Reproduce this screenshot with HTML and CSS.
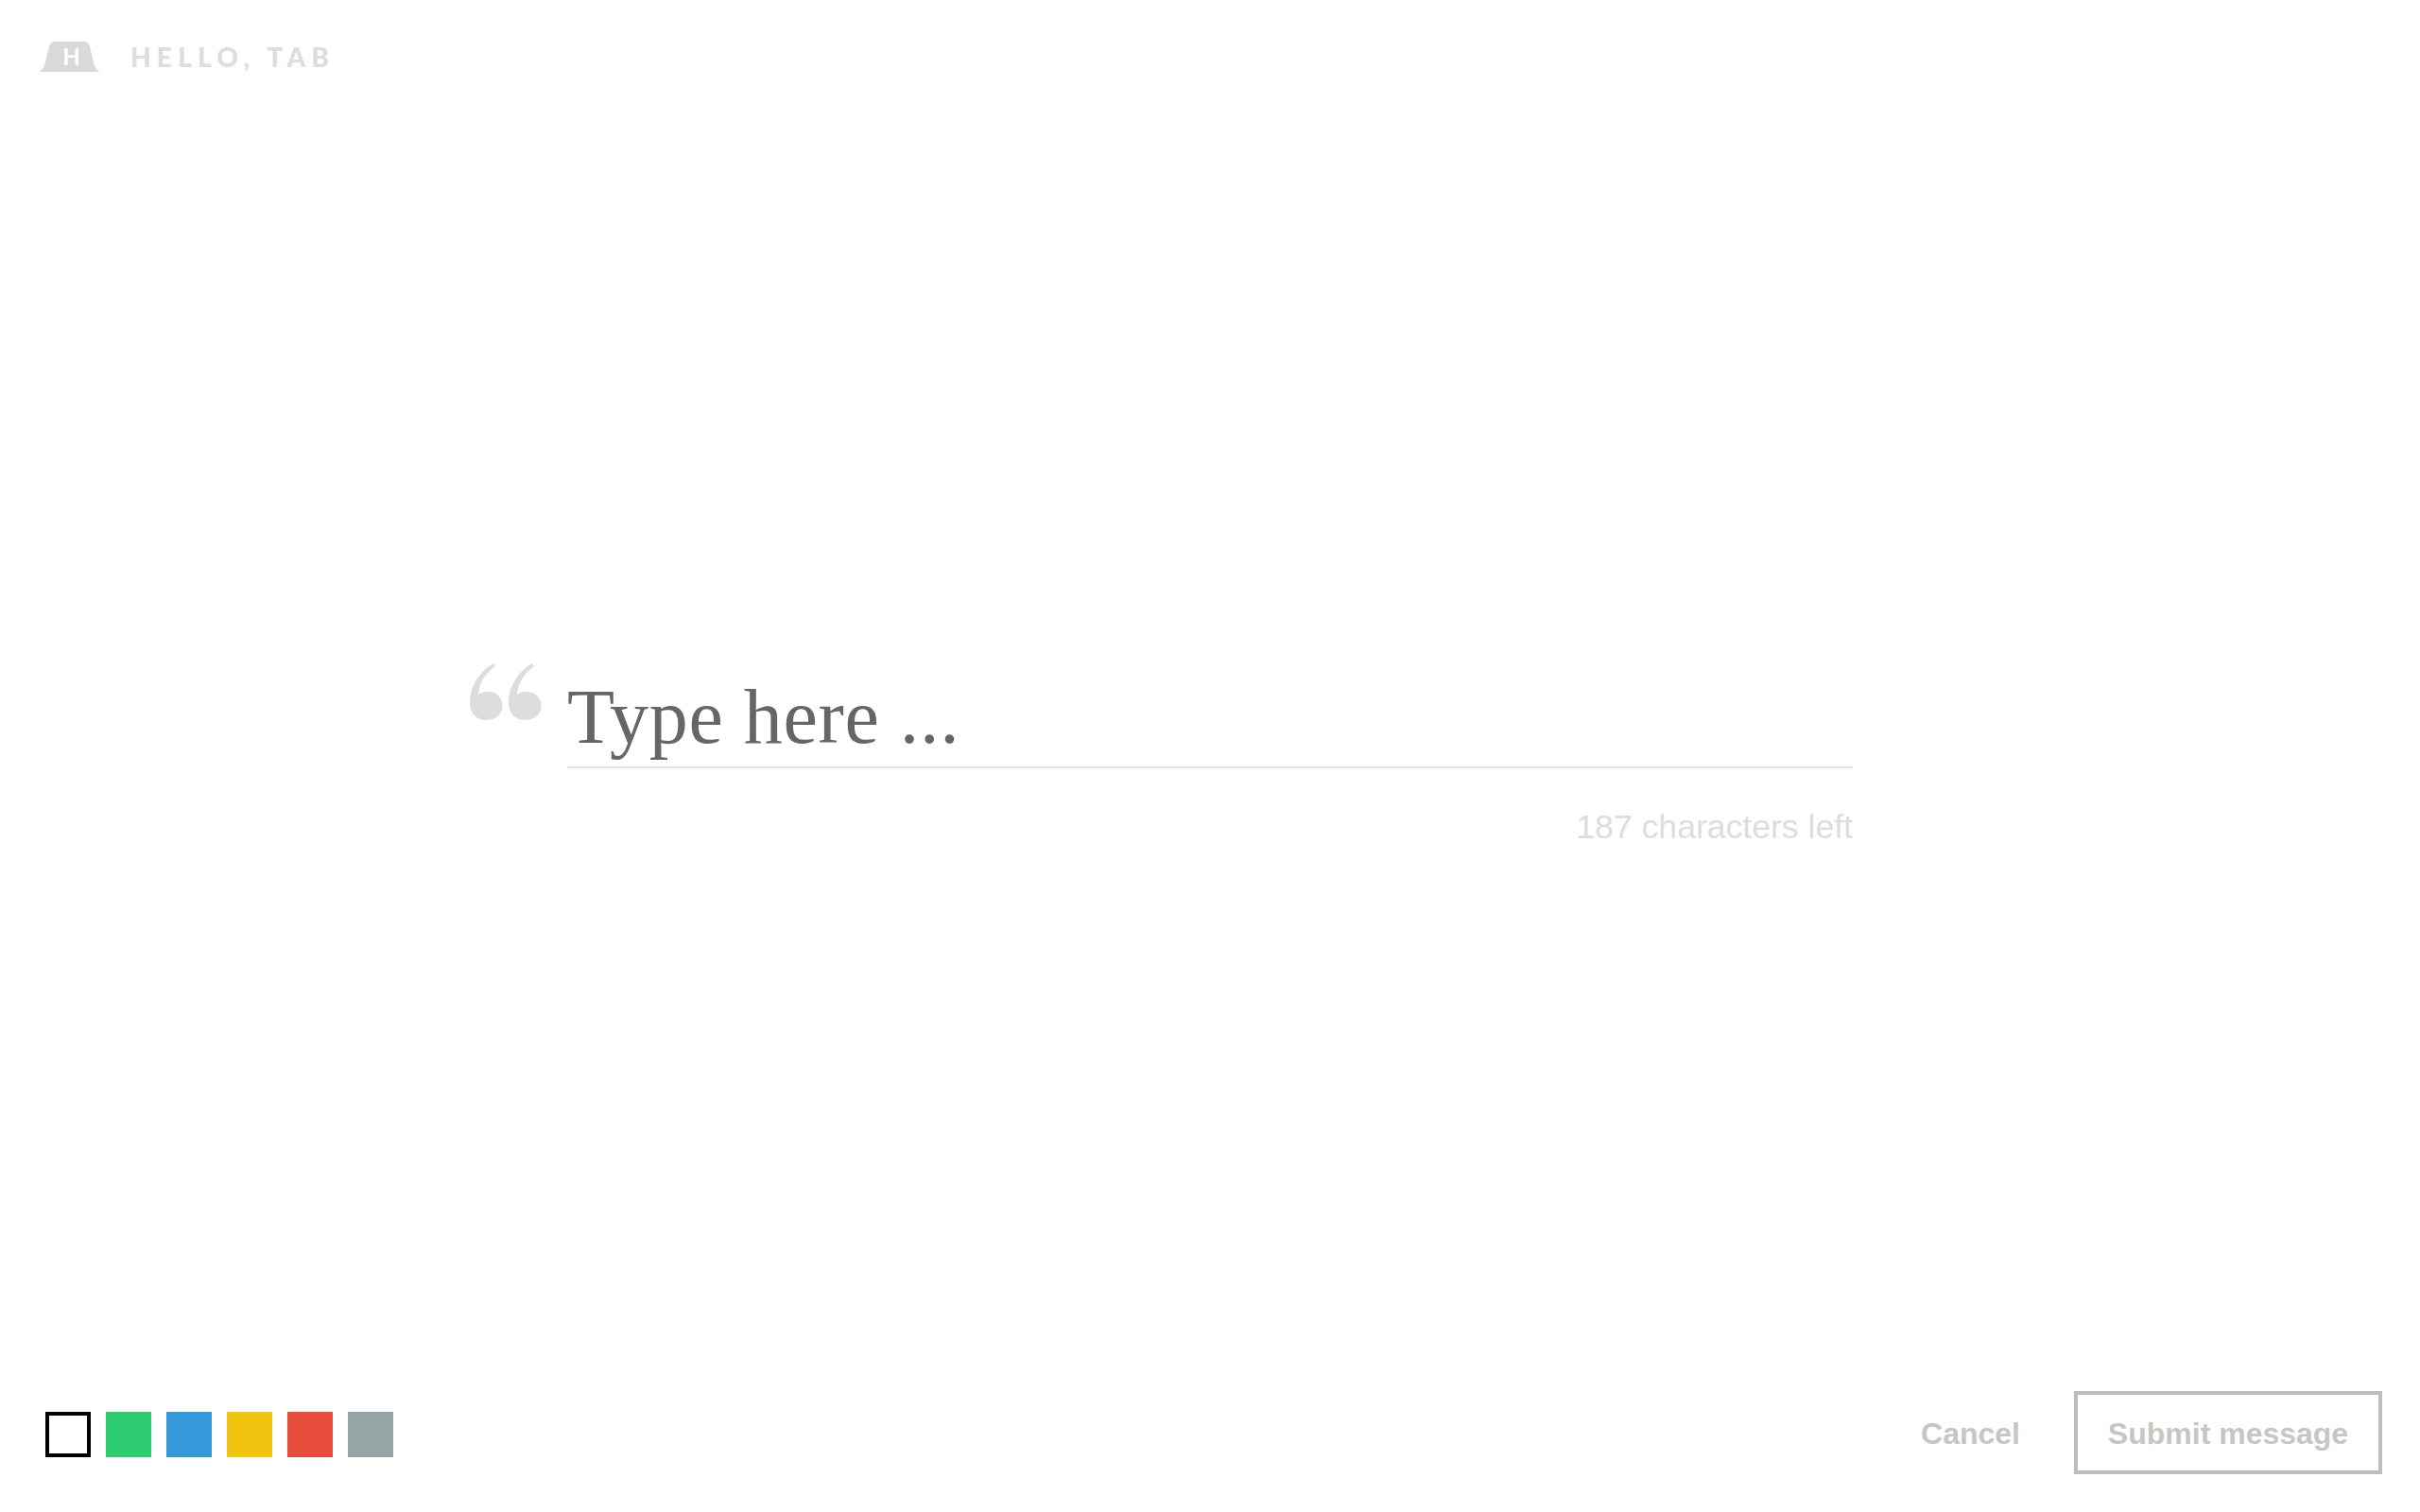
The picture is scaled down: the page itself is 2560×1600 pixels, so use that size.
FILE: index.html
```html
<!DOCTYPE html>
<html lang="en">

<head>
  <meta charset="UTF-8">
  <meta name="viewport" content="width=device-width, initial-scale=1.0">
  <title>Hello, Tab</title>
  <link rel="stylesheet" href="styles.css">
</head>

<body>
  <div class="page">
    <header class="header">
      <svg class="logo" viewBox="0 0 65 32">
        <path class="logo-shape" d="M0 32C4 30 6 27 7 22L11 5C12 2 14 0 17 0H48C51 0 53 2 54 5L58 22C59 27 61 30 65 32Z" />
        <text class="logo-letter" x="34.500" y="25" text-anchor="middle">H</text>
      </svg>
      <span class="brand">HELLO, TAB</span>
    </header>

    <main class="main">
      <div class="message">
        <div class="field">
          <svg class="quote" viewBox="0 0 78 60">
            <path id="quoteMark" d="M27 0L29 3C18 11 12 21 11 33C13 31 17 30 21 30C30 30 36.500 36 36.500 45C36.500 54 29 60 19 60C8 60 2 52 2 42C2 23 13 8 27 0Z" />
            <use href="#quoteMark" x="41" />
          </svg>
          <div class="placeholder">Type here ...</div>
        </div>
        <div class="counter">187 characters left</div>
      </div>
    </main>

    <footer class="footer">
      <div class="swatches">
        <div class="swatch swatch-white"></div>
        <div class="swatch swatch-green"></div>
        <div class="swatch swatch-blue"></div>
        <div class="swatch swatch-yellow"></div>
        <div class="swatch swatch-red"></div>
        <div class="swatch swatch-grey"></div>
      </div>
      <div class="actions">
        <button class="cancel">Cancel</button>
        <button class="submit">Submit message</button>
      </div>
    </footer>
  </div>
</body>

</html>
```

FILE: styles.css
```css
* {
  margin: 0;
  padding: 0;
  box-sizing: border-box;
}

body {
  background: #fff;
  font-family: "Liberation Sans", Arial, sans-serif;
}

.page {
  display: flex;
  flex-direction: column;
  height: 100vh;
}

.header {
  display: flex;
  align-items: center;
  padding: 44px 41px 57px;
}

.logo {
  width: 65px;
  height: 32px;
  margin-right: 32px;
}

.logo-shape {
  fill: #d9d9d9;
}

.logo-letter {
  fill: #fff;
  font-family: Lato, sans-serif;
  font-size: 24px;
  font-weight: 700;
}

.brand {
  color: #ddd;
  font-family: Lato, sans-serif;
  font-size: 28px;
  font-weight: 900;
  letter-spacing: 6.200px;
  line-height: 32px;
}

.main {
  flex: 1;
  display: flex;
  flex-direction: column;
  justify-content: center;
  align-items: center;
}

.message {
  width: 1360px;
}

.field {
  position: relative;
  padding-bottom: 3px;
  border-bottom: 2px solid #e3e3e3;
}

.quote {
  position: absolute;
  left: -105px;
  top: -8px;
  width: 78px;
  height: 60px;
  fill: #ddd;
}

.placeholder {
  color: #666;
  font-family: "Liberation Serif", "Times New Roman", serif;
  font-size: 82px;
  letter-spacing: 0.700px;
  line-height: 98px;
}

.counter {
  margin-top: 42px;
  color: #ddd;
  font-size: 35.600px;
  line-height: 40px;
  text-align: right;
}

.footer {
  display: flex;
  justify-content: space-between;
  align-items: center;
  padding: 0 40px 40px 48px;
}

.swatches {
  display: flex;
  gap: 16px;
  margin-top: 4px;
}

.swatch {
  width: 48px;
  height: 48px;
}

.swatch-white {
  border: 4px solid #000;
}

.swatch-green {
  background: #2ecc71;
}

.swatch-blue {
  background: #3498db;
}

.swatch-yellow {
  background: #f1c40f;
}

.swatch-red {
  background: #e74c3c;
}

.swatch-grey {
  background: #95a5a6;
}

.actions {
  display: flex;
  align-items: center;
  gap: 57px;
}

button {
  padding-top: 2px;
  background: none;
  border: none;
  color: #c6c6c6;
  font-family: "Liberation Sans", Arial, sans-serif;
  font-size: 32px;
  font-weight: 700;
  cursor: pointer;
}

.submit {
  width: 326px;
  height: 88px;
  border: 4px solid #bdbdbd;
}
```
